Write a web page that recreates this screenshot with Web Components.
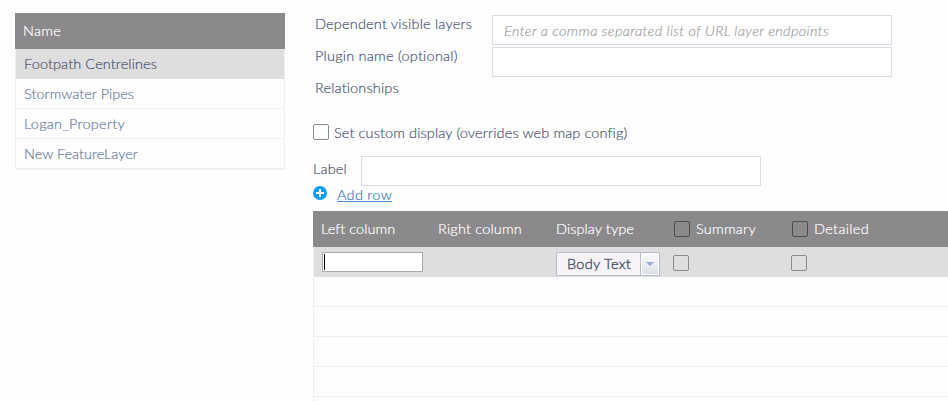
<!DOCTYPE html>
<html lang="en">
<head>
<meta charset="utf-8">
<title>Layer configuration</title>
<style>
html,body{margin:0;height:100%;overflow:hidden;background:#fefefe}
body{font:300 14.5px/20px Lato,"Open Sans",sans-serif;color:#4c5771;-webkit-text-stroke:.2px}
</style>
</head>
<body>
<config-page></config-page>
<script>
const define = (name, markup, setup) => {
  const t = document.createElement('template');
  t.innerHTML = markup;
  customElements.define(name, class extends HTMLElement {
    connectedCallback() {
      if (this.shadowRoot) return;
      const root = this.attachShadow({mode: 'open'});
      root.append(t.content.cloneNode(true));
      if (setup) setup(this, root);
    }
  });
};

// Label whose tracking is adjusted so that it fills the width given in "w".
define('text-label', `<style>
:host{display:block;white-space:pre;line-height:20px;flex:none}
span{display:inline-block}
</style><span><slot></slot></span>`, (host, root) => {
  const w = +host.getAttribute('w');
  if (!w) return;
  host.style.width = w + 'px';
  const span = root.querySelector('span');
  const n = host.textContent.length;
  span.style.letterSpacing = ((w - span.getBoundingClientRect().width) / n) + 'px';
});

define('text-field', `<style>
:host{display:flex;align-items:center;box-sizing:border-box;width:400px;height:30px;border:1px solid #dcdce6;background:#fff;padding:2px 0 0 11px;color:#a0a0a0;font-style:italic}
</style><slot></slot>`);

define('check-box', `<style>
:host{display:block;flex:none;box-sizing:border-box;width:16px;height:16px;border:1px solid var(--edge,#8b8b8b);border-radius:2px}
</style>`);

define('layer-row', `<style>
:host{display:flex;box-sizing:border-box;height:30px;padding:5px 0 0 8px;border-bottom:1px solid #eeeff5;color:#6b7da0}
:host([selected]){background:#dedede;border-color:#dedede;color:#4c5771}
</style><slot></slot>`);

define('layer-list', `<style>
:host{display:block;width:270px;flex:none}
header{height:36px;box-sizing:border-box;padding:8px 8px;background:#8c898c;color:#fff}
section{border:1px solid #eef1f6;border-top:0}
</style><header><text-label w="38">Name</text-label></header><section><slot></slot></section>`);

define('type-select', `<style>
:host{display:flex;box-sizing:border-box;width:104px;height:24px;border:1px solid #b3bccb;background:#f7f3f7}
.v{box-sizing:border-box;width:83px;padding:1px 0 0 10px;-webkit-text-stroke:.4px}
.a{box-sizing:border-box;width:19px;border-left:1px solid #b3bccb;padding:1px}
.b{height:20px;background:linear-gradient(#fafafa,#dce0e5);display:flex;align-items:center;justify-content:center;outline:1px solid #fff}
svg{display:block}
</style><div class="v"><slot></slot></div><div class="a"><div class="b"><svg width="8" height="4" viewBox="0 0 8 4"><path d="M0 0H8L4 4Z" fill="#93a9cf"/></svg></div></div>`);

define('cell-editor', `<style>
:host{display:block;box-sizing:border-box;width:101px;height:20px;border:1px solid #a9a9a9;background:#fff;padding:1px}
i{display:block;width:1px;height:16px;background:#000}
</style><i></i>`);

define('display-grid', `<style>
:host{display:block}
.row{display:grid;grid-template-columns:117px 118px 118px 118px 1fr;height:30px;box-sizing:border-box;padding-left:7px;border-left:1px solid #eeeff5;border-bottom:1px solid #eeeff5}
.head{height:36px;padding:8px 0 0 8px;background:#8c898c;color:#fff;border:0;--edge:#4d4b4d}
.sel{background:#dedede;border-bottom-color:#dedede}
.c{display:flex;gap:6px;align-items:start}
.head check-box{margin-top:2px}
.sel check-box{margin:8px 0 0 -1px}
cell-editor{margin:5px 0 0 1px}
type-select{margin-top:5px}
</style>
<div class="row head">
<div class="c"><text-label w="74">Left column</text-label></div>
<div class="c"><text-label w="84">Right column</text-label></div>
<div class="c"><text-label w="78">Display type</text-label></div>
<div class="c"><check-box></check-box><text-label w="60">Summary</text-label></div>
<div class="c"><check-box></check-box><text-label w="55">Detailed</text-label></div>
</div>
<div class="row sel">
<div class="c"><cell-editor></cell-editor></div><div></div>
<div class="c"><type-select><text-label w="64">Body Text</text-label></type-select></div>
<div class="c"><check-box></check-box></div><div class="c"><check-box></check-box></div>
</div>
<div class="row"></div><div class="row"></div><div class="row"></div><div class="row"></div><div class="row"></div>`);

define('add-link', `<style>
:host{display:flex;height:25px;gap:10px;color:#3b7cc2}
svg{display:block}
div{box-sizing:border-box;height:16px;border-bottom:1px solid #4b88c9}
::slotted(*){margin-top:-1px}
</style><svg width="14" height="14" viewBox="0 0 14 14"><circle cx="7" cy="7" r="7" fill="#129dfa"/><path d="M7 3V11M3 7H11" stroke="#fff" stroke-width="2"/></svg><div><slot></slot></div>`);

define('config-page', `<style>
:host{display:flex;width:948px;height:401px;box-sizing:border-box;padding:13px 0 0 15px;gap:28px;overflow:hidden}
main{flex:1;min-width:0}
.f{display:flex;justify-content:space-between;height:32px;padding:0 56px 0 2px;box-sizing:border-box}
.fields{padding-top:2px}
.f text-label{margin-top:-1px}
.check{display:flex;gap:5px;margin-top:13px;height:32px}
.check text-label{margin-top:-1px}
.label{display:flex;gap:14px;height:30px}
.label text-label{margin-top:3px}
</style>
<layer-list>
<layer-row selected><text-label w="133">Footpath Centrelines</text-label></layer-row>
<layer-row><text-label w="110">Stormwater Pipes</text-label></layer-row>
<layer-row><text-label w="101">Logan_Property</text-label></layer-row>
<layer-row><text-label w="114">New FeatureLayer</text-label></layer-row>
</layer-list>
<main>
<div class="fields">
<div class="f"><text-label w="157">Dependent visible layers</text-label><text-field><text-label w="325">Enter a comma separated list of URL layer endpoints</text-label></text-field></div>
<div class="f"><text-label w="143">Plugin name (optional)</text-label><text-field></text-field></div>
<div class="f"><text-label w="84">Relationships</text-label></div>
</div>
<div class="check"><check-box></check-box><text-label w="293">Set custom display (overrides web map config)</text-label></div>
<div class="label"><text-label w="34">Label</text-label><text-field></text-field></div>
<add-link><text-label w="55">Add row</text-label></add-link>
<display-grid></display-grid>
</main>`);
</script>
</body>
</html>
